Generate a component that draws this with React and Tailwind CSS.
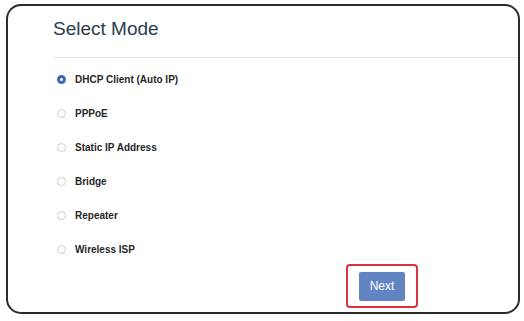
import { useState } from "react";

const modes = [
  "DHCP Client (Auto IP)",
  "PPPoE",
  "Static IP Address",
  "Bridge",
  "Repeater",
  "Wireless ISP",
];

export default function App() {
  const [mode, setMode] = useState(modes[0]);

  return (
    <div className="h-[321px] w-[524px] bg-white pl-[6px] pt-[4px] font-['Liberation_Sans',Arial,sans-serif]">
      <div className="h-[310px] w-[514px] rounded-[15px] border-2 border-[#2b2b2b] bg-white">
        <div className="pl-[45px]">
          <h1 className="pt-[12px] pb-[17px] text-[19px] leading-[22px] text-[#2c3b4d]">
            Select Mode
          </h1>
          <div className="h-px bg-[#e3e3e3]" />
          <ul className="mt-[4px]">
            {modes.map((m) => (
              <li key={m} className="flex h-[34px] items-center">
                <button
                  onClick={() => setMode(m)}
                  className="flex items-center gap-[9px] pl-[4px]"
                >
                  <span
                    className={`h-[9px] w-[9px] rounded-full ${
                      mode === m
                        ? "border-[3px] border-[#3a69b3] bg-white"
                        : "border border-[#cdcdcd] bg-white"
                    }`}
                  />
                  <span className="text-[10px] font-bold text-[#262626]">{m}</span>
                </button>
              </li>
            ))}
          </ul>
        </div>
        <div className="-mt-[2px] pl-[338px]">
          <div className="flex h-[44px] w-[72px] items-center justify-center rounded-[4px] border-2 border-[#d8323c]">
            <button className="h-[29px] w-[46px] rounded-[2px] bg-[#6384c2] text-[12px] text-white">
              Next
            </button>
          </div>
        </div>
      </div>
    </div>
  );
}
